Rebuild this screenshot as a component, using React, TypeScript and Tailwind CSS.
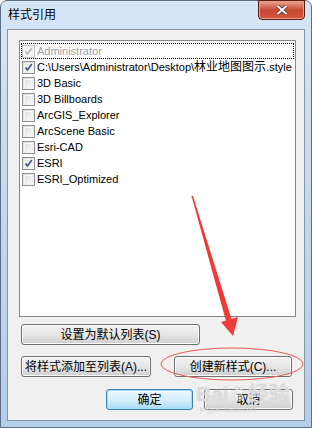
import React from 'react';

type Item = { label: string; cjk?: string; tail?: string; checked: boolean; disabled?: boolean };

const items: Item[] = [
  { label: 'Administrator', checked: true, disabled: true },
  { label: 'C:\\Users\\Administrator\\Desktop\\', cjk: '林业地图图示', tail: '.style', checked: true },
  { label: '3D Basic', checked: false },
  { label: '3D Billboards', checked: false },
  { label: 'ArcGIS_Explorer', checked: false },
  { label: 'ArcScene Basic', checked: false },
  { label: 'Esri-CAD', checked: false },
  { label: 'ESRI', checked: true },
  { label: 'ESRI_Optimized', checked: false },
];

const font = { fontFamily: '"Liberation Sans", "Noto Sans CJK SC", sans-serif' };

const CheckBox: React.FC<{ checked: boolean; disabled?: boolean }> = ({ checked, disabled }) => (
  <div
    className={`relative w-[13px] h-[13px] shrink-0 border ${
      disabled ? 'border-[#c2c2c2] bg-[#f4f4f4]' : 'border-[#8e8f8f] bg-gradient-to-br from-[#dcdcdc] to-[#fbfbfb]'
    }`}
  >
    {!disabled && <div className="absolute inset-[1px] border border-[#f4f4f4] bg-gradient-to-br from-[#e0e0e0] to-[#fafafa]" />}
    {checked && (
      <svg viewBox="0 0 11 11" className="absolute inset-0 w-[11px] h-[11px]">
        <path
          d="M2.5 5.5 L4.5 8 L8.8 2"
          fill="none"
          stroke={disabled ? '#b8b8b8' : '#3a4f8f'}
          strokeWidth="1.6"
        />
      </svg>
    )}
  </div>
);

const Button: React.FC<{ label: string; className: string; primary?: boolean }> = ({ label, className, primary }) => (
  <div
    className={`flex items-center justify-center rounded-[3px] border text-[12px] text-black ${
      primary
        ? 'border-[#3c7fb1] bg-gradient-to-b from-[#eaf6fd] via-[#d9f0fc] to-[#a7d9f5] shadow-[inset_0_0_0_1px_#a9dcf6]'
        : 'border-[#707070] bg-gradient-to-b from-[#f2f2f2] via-[#e6e6e6] to-[#cfcfcf] shadow-[inset_0_0_0_1px_#fcfcfc]'
    } ${className}`}
    style={font}
  >
    {label}
  </div>
);

const App: React.FC = () => {
  return (
    <div className="relative w-[312px] h-[428px] overflow-hidden bg-white" style={font}>
      <div className="flex flex-col w-[312px] h-[428px] rounded-t-[7px] border border-[#5b6e86] bg-gradient-to-b from-[#d6e6f6] via-[#c2d8ee] to-[#b4cde8]">
        {/* title bar */}
        <div className="relative h-[28px] shrink-0">
          <div className="pl-[7px] pt-[6px] text-[12px] text-black leading-[16px]">样式引用</div>
          <div className="absolute right-[6px] top-[-1px] w-[47px] h-[20px] rounded-b-[4px] border border-[#5a1d16] bg-gradient-to-b from-[#e8a594] via-[#c84a33] to-[#d6543c] flex items-center justify-center shadow-[inset_0_0_0_1px_#eb9b87]">
            <svg viewBox="0 0 12 10" className="w-[12px] h-[10px]">
              <path d="M1.5 1 L10.5 9 M10.5 1 L1.5 9" stroke="#4a2a26" strokeWidth="3.4" />
              <path d="M1.5 1 L10.5 9 M10.5 1 L1.5 9" stroke="#ffffff" strokeWidth="2" />
            </svg>
          </div>
        </div>
        {/* client area */}
        <div className="ml-[6px] w-[298px] h-[392px] border border-[#8595a8] bg-[#f0f0f0] flex flex-col">
          <div className="ml-[11px] mt-[10px] w-[277px] h-[277px] border border-[#828790] bg-white pt-[2px] pl-[1px]">
            {items.map((it, i) => (
              <div
                key={i}
                className={`flex items-center gap-[2px] h-[16px] w-[273px] ${
                  i === 0 ? 'border border-dotted border-black' : 'border border-transparent'
                }`}
              >
                <CheckBox checked={it.checked} disabled={it.disabled} />
                <span
                  className={`text-[11px] leading-[14px] whitespace-nowrap ${
                    it.disabled ? 'text-[#a0a0a0]' : 'text-black'
                  }`}
                >
                  {it.label}
                  {it.cjk && <span className="text-[12px]">{it.cjk}</span>}
                  {it.tail}
                </span>
              </div>
            ))}
          </div>
          <Button label="设置为默认列表(S)" className="ml-[13px] mt-[7px] w-[179px] h-[21px]" />
          <div className="flex mt-[11px] ml-[13px] gap-[23px]">
            <Button label="将样式添加至列表(A)..." className="w-[130px] h-[21px]" />
            <Button label="创建新样式(C)..." className="w-[118px] h-[21px]" />
          </div>
          <div className="flex mt-[12px] ml-[98px] gap-[11px]">
            <Button label="确定" primary className="w-[87px] h-[21px]" />
            <Button label="取消" className="w-[89px] h-[21px]" />
          </div>
        </div>
      </div>

      {/* annotation overlay */}
      <svg className="absolute inset-0 pointer-events-none" width="312" height="428" viewBox="0 0 312 428">
        <ellipse cx="232" cy="364" rx="71" ry="16" fill="none" stroke="#e75a5a" strokeWidth="1" />
        <polygon points="191.5,196 193,196 231.5,319 226,321" fill="#f03a3a" />
        <polygon points="221,322 238,317 233,336" fill="#f03a3a" />
      </svg>

      {/* watermark */}
      <div className="absolute left-[196px] top-[381px] pointer-events-none flex flex-col items-start">
        <div className="flex items-center text-[21px] leading-[25px] font-bold text-white/40 [text-shadow:0_0_1px_#c4c4c4]">
          <span>Bai</span>
          <svg viewBox="0 0 20 20" className="w-[17px] h-[17px] mx-[1px]">
            <g fill="rgba(255,255,255,0.4)" stroke="#c8c8c8" strokeWidth="0.8">
              <ellipse cx="10" cy="14" rx="5" ry="4" />
              <circle cx="4" cy="8" r="2" />
              <circle cx="8" cy="4" r="2" />
              <circle cx="13" cy="4" r="2" />
              <circle cx="17" cy="8" r="2" />
            </g>
          </svg>
          <span>经验</span>
        </div>
        <div className="text-[7px] leading-[8px] text-[#d4d4d4] ml-[4px]">jingyan.baidu.com</div>
      </div>
    </div>
  );
};

export default App;
